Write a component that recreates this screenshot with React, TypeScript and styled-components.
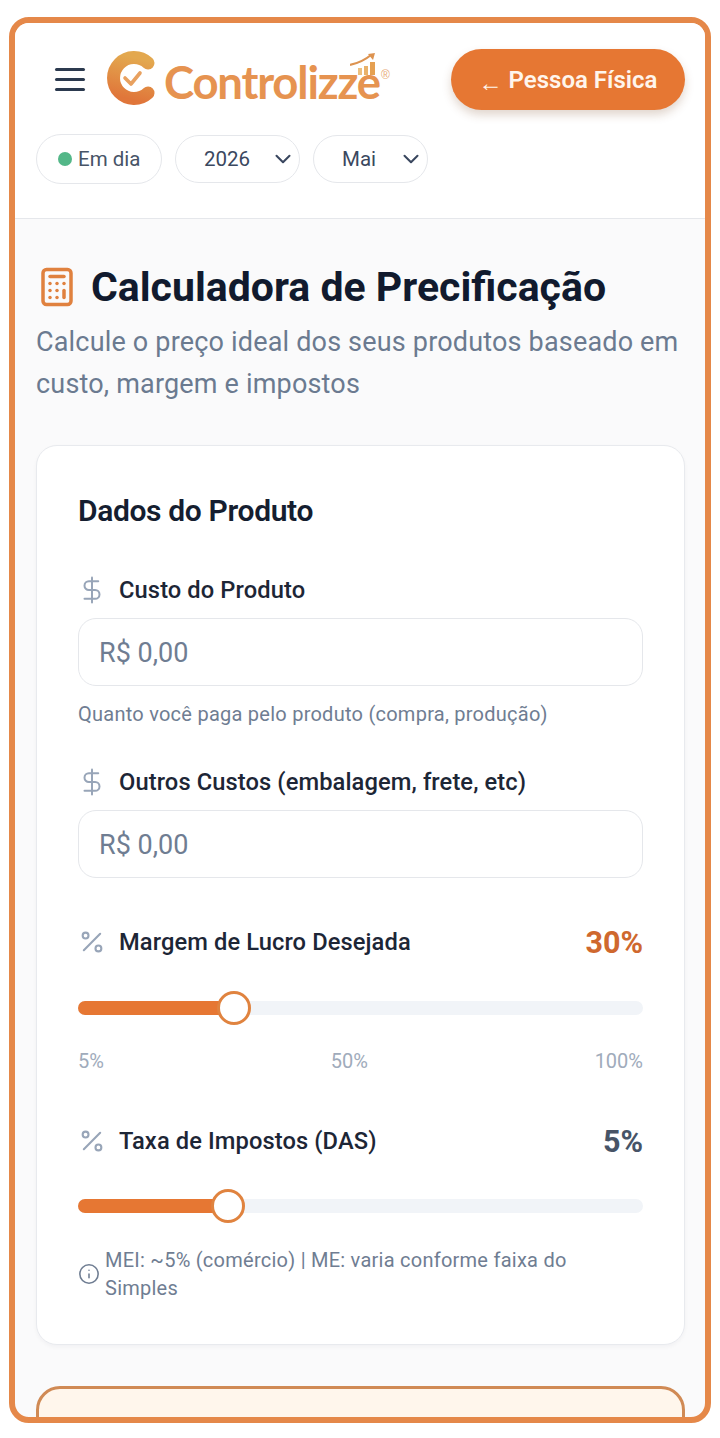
import React from "react";
import styled, { createGlobalStyle } from "styled-components";
import { Calculator, ChevronDown, DollarSign, Info, Percent } from "lucide-react";

const Global = createGlobalStyle`
  html, body { margin: 0; padding: 0; background: #fff; }
  body { font-family: Roboto, "Noto Sans", sans-serif; }
  * { box-sizing: border-box; }
`;

const Page = styled.div`
  width: 720px;
  height: 1438px;
  padding: 17px 9px 15px;
  background: #fff;
`;

const Frame = styled.div`
  height: 100%;
  border: 6px solid #e58849;
  border-radius: 20px;
  background: #fafafb;
  overflow: hidden;
`;

const Header = styled.header`
  height: 196px;
  background: #fff;
  border-bottom: 1px solid #e5e7eb;
  padding: 26px 20px 0 21px;
`;

const TopRow = styled.div`
  display: flex;
  align-items: center;
  height: 61px;
`;

const Burger = styled.div`
  width: 30px;
  margin: 0 22px 0 19px;
  display: flex;
  flex-direction: column;
  gap: 6.5px;
  span {
    display: block;
    height: 3.5px;
    border-radius: 2px;
    background: #2c3a4f;
  }
`;

const Logo = styled.div`
  display: flex;
  align-items: center;
  width: 283px;
  position: relative;
  top: -2px;
`;

const LogoWord = styled.span`
  font-family: Lato, sans-serif;
  font-weight: 700;
  font-size: 45.5px;
  letter-spacing: -1.2px;
  line-height: 1;
  margin-left: 7px;
  color: #e69350;
  position: relative;
  top: 4px;
`;

const LogoMarkR = styled.span`
  position: absolute;
  left: 274px;
  top: 18px;
  font: 400 12px "Liberation Sans", sans-serif;
  color: #e8ab78;
`;

const BackButton = styled.button`
  margin-left: auto;
  width: 234px;
  height: 61px;
  border: 0;
  border-radius: 31px;
  background: #e67733;
  color: #fff5ec;
  font: 600 24px Roboto, sans-serif;
  box-shadow: 0 5px 10px rgba(120, 70, 30, 0.22);
  display: flex;
  align-items: center;
  justify-content: center;
  gap: 6px;
  padding: 0;
`;

const BackArrow = styled.span`
  font-size: 24px;
  position: relative;
  top: 3px;
`;

const PillRow = styled.div`
  display: flex;
  align-items: center;
  gap: 13px;
  margin-top: 24px;
`;

const StatusPill = styled.div`
  width: 126px;
  height: 50px;
  border: 1px solid #e5e7eb;
  border-radius: 25px;
  display: flex;
  align-items: center;
  padding-left: 21px;
  gap: 6px;
  font-size: 20.5px;
  color: #475467;
  background: #fff;
`;

const Dot = styled.span`
  width: 14px;
  height: 14px;
  border-radius: 50%;
  background: #53b788;
`;

const SelectPill = styled.div<{ $w: number; $pad: number }>`
  width: ${(p) => p.$w}px;
  height: 48px;
  border: 1px solid #e5e7eb;
  border-radius: 24px;
  display: flex;
  align-items: center;
  justify-content: space-between;
  padding: 0 3px 0 ${(p) => p.$pad}px;
  font-size: 20.5px;
  color: #3b4860;
  background: #fff;
`;

const Main = styled.main`
  padding: 40px 20px 0 21px;
`;

const TitleRow = styled.div`
  display: flex;
  align-items: center;
  gap: 13px;
  margin-bottom: 6px;
`;

const Title = styled.h1`
  margin: 0;
  font-size: 41px;
  line-height: 56px;
  font-weight: 700;
  color: #111a2e;
`;

const Subtitle = styled.p`
  margin: 0;
  font-size: 27px;
  line-height: 42px;
  color: #6b7a90;
  letter-spacing: 0.18px;
`;

const Card = styled.section`
  margin-top: 40px;
  height: 900px;
  padding: 42px 41px 0;
  background: #fff;
  border: 1px solid #e8eaee;
  border-radius: 21px;
  box-shadow: 0 2px 4px rgba(16, 24, 40, 0.04);
`;

const CardTitle = styled.h2`
  margin: 0;
  font-size: 30px;
  line-height: 46px;
  font-weight: 600;
  color: #151e30;
  letter-spacing: -0.35px;
`;

const LabelRow = styled.div<{ $mt: number }>`
  display: flex;
  align-items: center;
  height: 34px;
  margin-top: ${(p) => p.$mt}px;
`;

const IconSlot = styled.span`
  flex: none;
  width: 27px;
  margin-right: 14px;
  display: flex;
  justify-content: center;
  color: #98a5b8;
  svg { flex: none; }
`;

const Label = styled.label`
  font-size: 23.7px;
  font-weight: 500;
  color: #1d2636;
  letter-spacing: 0.1px;
`;

const Amount = styled.strong<{ $accent?: boolean }>`
  margin-left: auto;
  font-size: 30.5px;
  font-weight: 700;
  color: ${(p) => (p.$accent ? "#cf682e" : "#475467")};
`;

const MoneyInput = styled.input`
  display: block;
  width: 100%;
  height: 68px;
  margin-top: 11px;
  padding: 1px 20px 0;
  border: 1px solid #e5e7eb;
  border-radius: 18px;
  background: #fff;
  font: 400 27px Roboto, sans-serif;
  outline: none;
  &::placeholder { color: #6f7d92; opacity: 1; }
`;

const Hint = styled.p`
  margin: 16px 0 0;
  font-size: 20px;
  line-height: 24px;
  color: #6f7d92;
  letter-spacing: 0.25px;
`;

const Track = styled.div<{ $mt: number }>`
  position: relative;
  height: 14px;
  margin-top: ${(p) => p.$mt}px;
  border-radius: 7px;
  background: #f1f4f8;
`;

const Fill = styled.div`
  position: absolute;
  top: 0;
  bottom: 0;
  left: 0;
  border-radius: 7px;
  background: #e67733;
`;

const Thumb = styled.div`
  position: absolute;
  top: -10px;
  width: 34px;
  height: 34px;
  margin-left: -17px;
  border: 3px solid #e0833f;
  border-radius: 50%;
  background: #fff;
`;

const Scale = styled.div`
  display: flex;
  justify-content: space-between;
  margin-top: 34px;
  font-size: 20px;
  line-height: 24px;
  color: #a0abbb;
`;

const Note = styled.div`
  display: flex;
  align-items: center;
  gap: 5px;
  margin-top: 33px;
  width: 500px;
  font-size: 20px;
  line-height: 28px;
  color: #6f7d92;
  letter-spacing: 0.25px;
  svg { flex: none; }
`;

const ResultCard = styled.section`
  margin-top: 41px;
  height: 60px;
  border: 3px solid #d08a55;
  border-radius: 24px;
  background: #fff6ec;
`;

function LogoMark() {
  return (
    <svg width="50" height="56" viewBox="0 0 50 56" aria-hidden="true">
      <defs>
        <linearGradient id="markFill" x1="0.6" y1="0" x2="0.4" y2="1">
          <stop offset="0" stopColor="#e3a84f" />
          <stop offset="1" stopColor="#e0763a" />
        </linearGradient>
      </defs>
      <path
        d="M41 13 A 20.5 20.5 0 1 0 41 43"
        fill="none"
        stroke="url(#markFill)"
        strokeWidth="13"
        strokeLinecap="round"
      />
      <path d="M18 28 L24 34 L33 23" fill="none" stroke="#e8a160" strokeWidth="3.6" strokeLinecap="round" strokeLinejoin="round" />
    </svg>
  );
}

function LogoChart() {
  return (
    <svg
      width="28"
      height="24"
      viewBox="0 0 28 24"
      aria-hidden="true"
      style={{ position: "absolute", left: 243, top: 3 }}
    >
      <path d="M0 12 C 9 10, 15 7, 21 2" fill="none" stroke="#dd9350" strokeWidth="2.2" />
      <path d="M18 1 L25 0 L23 7 Z" fill="#dd9350" />
      <rect x="8" y="15" width="4" height="7" fill="#edc07f" />
      <rect x="14" y="13" width="4" height="9" fill="#e9b26a" />
      <rect x="20" y="9" width="5" height="13" fill="#e5a052" />
    </svg>
  );
}

function Slider({ fill, thumb, mt }: { fill: number; thumb: number; mt: number }) {
  return (
    <Track $mt={mt}>
      <Fill style={{ width: fill }} />
      <Thumb style={{ left: thumb }} />
    </Track>
  );
}

export default function App() {
  return (
    <Page>
      <Global />
      <Frame>
        <Header>
          <TopRow>
            <Burger>
              <span />
              <span />
              <span />
            </Burger>
            <Logo>
              <LogoMark />
              <LogoWord>Controlizze</LogoWord>
              <LogoChart />
              <LogoMarkR>®</LogoMarkR>
            </Logo>
            <BackButton>
              <BackArrow>←</BackArrow> Pessoa Física
            </BackButton>
          </TopRow>
          <PillRow>
            <StatusPill>
              <Dot />
              Em dia
            </StatusPill>
            <SelectPill $w={125} $pad={28}>
              2026
              <ChevronDown size={26} strokeWidth={1.9} color="#3b4860" />
            </SelectPill>
            <SelectPill $w={115} $pad={28}>
              Mai
              <ChevronDown size={26} strokeWidth={1.9} color="#3b4860" />
            </SelectPill>
          </PillRow>
        </Header>
        <Main>
          <TitleRow>
            <Calculator size={42} strokeWidth={2} color="#e0813f" />
            <Title>Calculadora de Precificação</Title>
          </TitleRow>
          <Subtitle>Calcule o preço ideal dos seus produtos baseado em custo, margem e impostos</Subtitle>
          <Card>
            <CardTitle>Dados do Produto</CardTitle>
            <LabelRow $mt={39}>
              <IconSlot><DollarSign size={30} strokeWidth={1.6} /></IconSlot>
              <Label>Custo do Produto</Label>
            </LabelRow>
            <MoneyInput placeholder="R$ 0,00" readOnly />
            <Hint>Quanto você paga pelo produto (compra, produção)</Hint>
            <LabelRow $mt={39}>
              <IconSlot><DollarSign size={30} strokeWidth={1.6} /></IconSlot>
              <Label>Outros Custos (embalagem, frete, etc)</Label>
            </LabelRow>
            <MoneyInput placeholder="R$ 0,00" readOnly />
            <LabelRow $mt={47}>
              <IconSlot><Percent size={28} strokeWidth={1.8} /></IconSlot>
              <Label>Margem de Lucro Desejada</Label>
              <Amount $accent>30%</Amount>
            </LabelRow>
            <Slider mt={42} fill={150} thumb={156} />
            <Scale>
              <span>5%</span>
              <span>50%</span>
              <span>100%</span>
            </Scale>
            <LabelRow $mt={51}>
              <IconSlot><Percent size={28} strokeWidth={1.8} /></IconSlot>
              <Label>Taxa de Impostos (DAS)</Label>
              <Amount>5%</Amount>
            </LabelRow>
            <Slider mt={41} fill={144} thumb={150} />
            <Note>
              <Info size={22} strokeWidth={1.7} />
              <span>MEI: ~5% (comércio) | ME: varia conforme faixa do Simples</span>
            </Note>
          </Card>
          <ResultCard />
        </Main>
      </Frame>
    </Page>
  );
}
